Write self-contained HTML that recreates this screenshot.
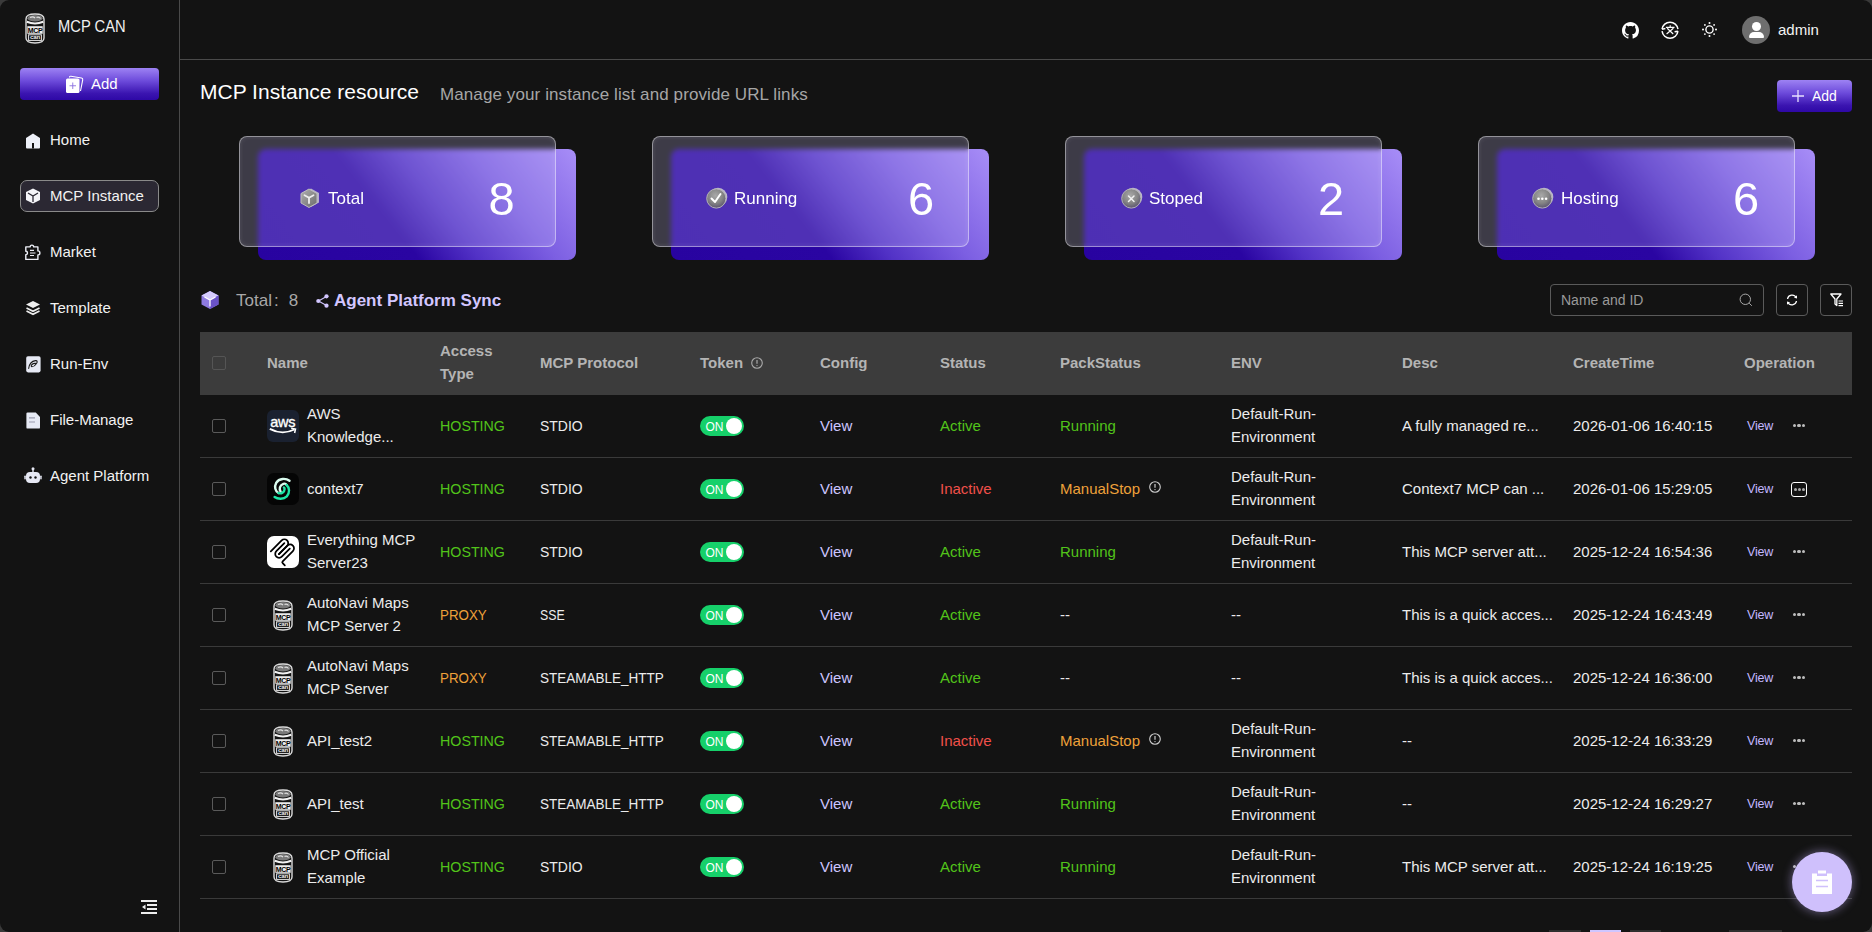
<!DOCTYPE html>
<html><head><meta charset="utf-8">
<style>
*{box-sizing:border-box;margin:0;padding:0}
html,body{width:1872px;height:932px;overflow:hidden;background:#3a3a3a;font-family:"Liberation Sans",sans-serif;color:#e8e8e8}
#wrap{position:absolute;left:0;top:0;width:1872px;height:932px;background:#131313;border-radius:9px;overflow:hidden}
.abs{position:absolute}
.nw{white-space:nowrap}
#side{position:absolute;left:0;top:0;width:180px;height:932px;border-right:1px solid #4a4a4a}
#hdr{position:absolute;left:180px;top:59px;width:1692px;height:1px;background:#4a4a4a}
.logo-t{position:absolute;left:58px;top:18px;font-size:16px;color:#f0f0f0;white-space:nowrap;transform:scaleX(0.92);transform-origin:0 50%}
.grad-btn{background:linear-gradient(180deg,#9d82f3 0%,#6d4bdb 40%,#3a14b0 80%,#2e08a6 100%)}
.btn-add{position:absolute;left:20px;top:68px;width:139px;height:32px;border-radius:4px;color:#fff;font-size:15px}
.nav{position:absolute;left:50px;font-size:15px;color:#f2f2f2;white-space:nowrap}
.nav-ic{position:absolute;left:25px}
.nav-active{position:absolute;left:20px;top:180px;width:139px;height:32px;border:1px solid #8a8a8a;border-radius:7px;background:#2b2833}
.title{position:absolute;left:200px;top:80px;font-size:21px;color:#fff;white-space:nowrap}
.sub{position:absolute;left:440px;top:84.5px;font-size:17px;letter-spacing:0.1px;color:#a6a6a6;white-space:nowrap}
.card{position:absolute;top:136px;width:337px;height:124px}
.card .back{position:absolute;left:19px;top:13px;width:318px;height:111px;border-radius:8px;background:linear-gradient(52deg,#2803a0 0%,#2a05a2 40%,#5232c6 55%,#7c5fe2 74%,#a88ef7 100%)}
.card .front{position:absolute;left:0;top:0;width:317px;height:111px;border-radius:8px;background:rgba(205,195,245,0.23);border:1px solid rgba(255,255,255,0.45);box-shadow:inset 0 0 5px rgba(255,255,255,0.12);backdrop-filter:blur(2.5px);-webkit-backdrop-filter:blur(2.5px)}
.card .lbl{position:absolute;top:53px;font-size:17px;color:#fff;white-space:nowrap;line-height:20px}
.card .num{position:absolute;top:39.5px;font-size:47px;color:#fff;line-height:46px;white-space:nowrap}
.card .ic2{position:absolute;top:51px}
.card .icx{position:absolute;top:52px;width:20px;height:20px;border-radius:50%;background:radial-gradient(circle at 40% 35%,#b8b8b8 0%,#8a8a8a 45%,#5e5e5e 100%);border:1px solid #a0a0a0}
.thead{position:absolute;left:200px;top:332px;width:1652px;height:63px;background:#3c3c3c}
.th{position:absolute;top:0;height:63px;padding-bottom:3px;display:flex;align-items:center;font-size:15px;font-weight:bold;color:#b4b4b4;line-height:23px;white-space:nowrap}
.tr{position:absolute;left:200px;width:1652px;height:63px;border-bottom:1px solid #3a3a3a}
.td{position:absolute;top:0;height:62px;padding-bottom:2px;display:flex;align-items:center;font-size:15px;color:#ececec;line-height:23px;white-space:nowrap}
.chk{position:absolute;width:14px;height:14px;border:1px solid #5a5a5a;border-radius:2px}
.ico{position:relative;width:32px;height:32px;border-radius:6px;overflow:hidden}
.info{margin-left:9px;position:relative;top:-1px}
.tog{position:absolute;width:44px;height:20px;border-radius:10px;background:#16d06a}
.tog span{position:absolute;left:5.5px;top:4px;font-size:12px;color:#fff;line-height:14px}
.tog i{position:absolute;right:2px;top:2px;width:16px;height:16px;border-radius:50%;background:#fff}
.dots{position:absolute;display:flex;gap:1.5px;padding-left:0.5px}
.dots i{display:block;width:3.3px;height:3.3px;border-radius:50%;background:#bdbdbd}
.dots.boxed{width:16px;height:15px;border:1.5px solid #fff;border-radius:3px;justify-content:center;align-items:center;gap:1px}
.dots.boxed i{width:3px;height:3px;background:#aaa}
</style></head><body>
<div id="wrap"><svg width="0" height="0" style="position:absolute"><defs><radialGradient id="gball" cx="45%" cy="35%" r="65%"><stop offset="0" stop-color="#a8a8a8"/><stop offset="0.6" stop-color="#858585"/><stop offset="1" stop-color="#5d5670"/></radialGradient><linearGradient id="ghex" x1="0" y1="0" x2="1" y2="1"><stop offset="0" stop-color="#b0b0b0"/><stop offset="1" stop-color="#6a6a6a"/></linearGradient></defs></svg>
<div id="side">
  <!-- logo can -->
  <svg style="position:absolute;left:24px;top:12px" width="22" height="32" viewBox="0 0 22 32"><path d="M2 7 Q2 2 11 2 Q20 2 20 7 L20 26 Q20 31 11 31 Q2 31 2 26 Z" fill="#141414" stroke="#dcdcdc" stroke-width="1.4"/><ellipse cx="11" cy="6.2" rx="7.6" ry="3.3" fill="#7a7a7a"/><path d="M6 5.5 Q9 4 11 6 M12.5 5.5 Q15 4.5 16.5 6.5" stroke="#e0e0e0" stroke-width="1.1" fill="none"/><path d="M2.8 9.8 Q11 13.2 19.2 9.8" fill="none" stroke="#f2f2f2" stroke-width="2.2"/><rect x="3.3" y="14.2" width="15.4" height="7.6" fill="#ececec"/><text x="11" y="20.6" font-size="7" font-weight="bold" text-anchor="middle" fill="#000" font-family="Liberation Sans" letter-spacing="-0.3">MCP</text><rect x="4.6" y="22.8" width="12.8" height="5.6" fill="#0c0c0c" stroke="#e6e6e6" stroke-width="1"/><text x="11" y="27.4" font-size="6.2" font-weight="bold" text-anchor="middle" fill="#f0f0f0" font-family="Liberation Sans" letter-spacing="-0.3">can</text></svg>
  <div class="logo-t">MCP CAN</div>
  <div class="btn-add grad-btn">
    <svg class="abs" style="left:45px;top:7px" width="20" height="19" viewBox="0 0 20 19"><path d="M4.5 2.5 Q4.5 1 6 1.2 L16.5 3 Q18 3.3 17.7 4.8 L15.5 16" fill="none" stroke="#fff" stroke-width="1.1"/><rect x="1" y="3.5" width="13.5" height="14.5" rx="1.5" fill="#fff"/><path d="M7.75 7.5v6.5M4.5 10.75h6.5" stroke="#8a70e0" stroke-width="0.9"/></svg>
    <span class="abs nw" style="left:71px;top:7px">Add</span>
  </div>
  <div class="nav-active"></div>
  <!-- home -->
  <svg class="nav-ic" style="top:133px" width="16" height="16" viewBox="0 0 16 16"><path d="M8 0.5 L15 5 L15 14.5 Q15 15.5 14 15.5 L2 15.5 Q1 15.5 1 14.5 L1 5 Z" fill="#eef0f8"/><rect x="7" y="10" width="2" height="5.5" fill="#131313"/></svg>
  <div class="nav" style="top:131px">Home</div>
  <!-- cube -->
  <svg class="nav-ic" style="top:188px" width="16" height="16" viewBox="0 0 16 16"><path d="M8 0.5 L15 4 L15 12 L8 15.5 L1 12 L1 4 Z" fill="#f4f4f8"/><path d="M3 5 L8 8 L13 5 M8 8 L8 14" fill="none" stroke="#2b2833" stroke-width="1.3"/></svg>
  <div class="nav" style="top:187px">MCP Instance</div>
  <!-- market -->
  <svg class="nav-ic" style="top:243.5px;left:25px" width="17" height="17" viewBox="0 0 17 17"><path d="M0.8 2.9 H5.1 A1.8 1.8 0 0 1 8.7 2.9 H12.9 V6.9 A2 2 0 0 1 12.9 10.9 V15.4 H0.8 V10.6 A1.7 1.7 0 0 0 0.8 7.2 Z" fill="none" stroke="#eef0f8" stroke-width="1.4" stroke-linejoin="round"/><path d="M5 6.4h4M5 9h5.5M5 11.5h4" stroke="#eef0f8" stroke-width="1.1"/></svg>
  <div class="nav" style="top:243px">Market</div>
  <!-- template layers -->
  <svg class="nav-ic" style="top:300px" width="16" height="16" viewBox="0 0 16 16"><path d="M8 1 L15 4.5 L8 8 L1 4.5 Z" fill="#eee"/><path d="M1.5 8 L8 11.3 L14.5 8" fill="none" stroke="#eee" stroke-width="1.6"/><path d="M1.5 11 L8 14.3 L14.5 11" fill="none" stroke="#eee" stroke-width="1.6"/></svg>
  <div class="nav" style="top:299px">Template</div>
  <!-- run-env -->
  <svg class="nav-ic" style="top:355.5px;left:25.5px" width="15" height="17" viewBox="0 0 15 17"><rect x="0.2" y="0.2" width="14.4" height="16.2" rx="1.8" fill="#e6e9f4"/><path d="M2.7 12.4 C3.2 8.5 4.5 5.2 9.5 4.6 C11.5 4.4 11.5 6 10.5 7.5 C9.5 9 7.5 10.8 6 10.8 C5 10.8 5 9.5 6 8.5 C7 7.5 8.5 7.3 9.5 7.4" fill="none" stroke="#1a1a1a" stroke-width="1.1" stroke-linecap="round"/></svg>
  <div class="nav" style="top:355px">Run-Env</div>
  <!-- file -->
  <svg class="nav-ic" style="top:411.5px;left:26.3px" width="15" height="17" viewBox="0 0 15 17"><path d="M1.6 0.4h8.2l4.2 4.6v10.4q0 1.2-1.2 1.2h-11.2q-1.2 0-1.2-1.2v-13.8q0-1.2 1.2-1.2z" fill="#e6e9f4"/><path d="M3 5.8h6M3 10h6" stroke="#9a9cae" stroke-width="1.2"/></svg>
  <div class="nav" style="top:411px">File-Manage</div>
  <!-- robot -->
  <svg class="nav-ic" style="top:467px;left:24px" width="18" height="17" viewBox="0 0 18 17"><circle cx="9" cy="1.8" r="1.5" fill="#e6e8f4"/><rect x="8.3" y="2" width="1.4" height="3" fill="#e6e8f4"/><rect x="2" y="5" width="14" height="11" rx="4" fill="#e6e8f4"/><rect x="0.3" y="8.5" width="1.5" height="4" rx="0.7" fill="#e6e8f4"/><rect x="16.2" y="8.5" width="1.5" height="4" rx="0.7" fill="#e6e8f4"/><circle cx="6.5" cy="10.5" r="1.2" fill="#131313"/><circle cx="11.5" cy="10.5" r="1.2" fill="#131313"/></svg>
  <div class="nav" style="top:467px">Agent Platform</div>
  <!-- collapse -->
  <svg class="abs" style="left:141px;top:900px" width="16" height="14" viewBox="0 0 16 14"><rect x="0" y="0" width="16" height="2" fill="#eee"/><rect x="6" y="4" width="10" height="2" fill="#eee"/><rect x="6" y="8" width="10" height="2" fill="#eee"/><rect x="0" y="12" width="16" height="2" fill="#eee"/><path d="M1 7 L4.5 4.5 L4.5 9.5 Z" fill="#eee"/></svg>
</div>
<div id="hdr"></div>

<!-- header icons -->
<svg class="abs" style="left:1621.5px;top:21.5px" width="17" height="17" viewBox="0 0 16 16"><path fill="#fff" d="M8 0C3.58 0 0 3.58 0 8c0 3.54 2.29 6.53 5.47 7.59.4.07.55-.17.55-.38 0-.19-.01-.82-.01-1.49-2.01.37-2.53-.49-2.69-.94-.09-.23-.48-.94-.82-1.13-.28-.15-.68-.52-.01-.53.63-.01 1.08.58 1.23.82.72 1.21 1.87.87 2.33.66.07-.52.28-.87.51-1.07-1.78-.2-3.64-.89-3.64-3.95 0-.87.31-1.59.82-2.15-.08-.2-.36-1.02.08-2.12 0 0 .67-.21 2.2.82.64-.18 1.32-.27 2-.27.68 0 1.36.09 2 .27 1.53-1.04 2.2-.82 2.2-.82.44 1.1.16 1.92.08 2.12.51.56.82 1.27.82 2.15 0 3.07-1.87 3.75-3.65 3.95.29.25.54.73.54 1.48 0 1.07-.01 1.93-.01 2.2 0 .21.15.46.55.38A8.013 8.013 0 0016 8c0-4.42-3.58-8-8-8z"/></svg>
<svg class="abs" style="left:1660.5px;top:21px" width="18" height="18" viewBox="0 0 18 18"><g fill="none" stroke="#fff" stroke-width="1.5"><path d="M1.06 8.2 A8 8 0 0 1 16.94 8.2"/><path d="M16.94 10.2 A8 8 0 0 1 1.06 10.2"/><path d="M1.06 8.2 L4.4 7.6"/><path d="M16.94 10.2 L13.6 10.8"/></g><g fill="none" stroke="#fff" stroke-width="1.2"><path d="M9.2 4.2v1.6M4.9 6.3h8.6M6.2 7.2 L12.2 13M12.4 7.2 L5.6 13"/></g></svg>
<svg class="abs" style="left:1702px;top:22px" width="15" height="15" viewBox="0 0 15 15"><circle cx="7.5" cy="7.5" r="3.6" fill="none" stroke="#fff" stroke-width="1.4"/><g fill="#fff"><circle cx="7.5" cy="1" r="1"/><circle cx="7.5" cy="14" r="1"/><circle cx="1" cy="7.5" r="1"/><circle cx="14" cy="7.5" r="1"/><circle cx="2.9" cy="2.9" r="0.9"/><circle cx="12.1" cy="12.1" r="0.9"/><circle cx="2.9" cy="12.1" r="0.9"/><circle cx="12.1" cy="2.9" r="0.9"/></g></svg>
<div class="abs" style="left:1742px;top:16px;width:28px;height:28px;border-radius:50%;background:#6e6e6e;overflow:hidden">
  <div class="abs" style="left:10px;top:6px;width:9px;height:9px;border-radius:50%;background:#fff"></div>
  <div class="abs" style="left:7px;top:16px;width:14.5px;height:6px;border-radius:5px 5px 1px 1px;background:#fff"></div>
</div>
<div class="abs nw" style="left:1778px;top:21px;font-size:15px;color:#f2f2f2">admin</div>

<div class="title">MCP Instance resource</div>
<div class="sub">Manage your instance list and provide URL links</div>
<div class="abs grad-btn" style="left:1777px;top:80px;width:75px;height:32px;border-radius:4px">
  <svg class="abs" style="left:15px;top:10px" width="12" height="12" viewBox="0 0 12 12"><path d="M6 0v12M0 6h12" stroke="#e8e0ff" stroke-width="1.3"/></svg>
  <span class="abs nw" style="left:35px;top:8px;font-size:14px;color:#fff">Add</span>
</div>

<!-- cards -->
<div class="card" style="left:239px"><div class="back"></div><div class="front"></div>
  <svg class="ic2" style="left:60px" width="22" height="22" viewBox="0 0 22 22"><path d="M12 1.5 L20 6 L20 15.5 L12 20 L4 15.5 L4 6 Z" fill="#cfcfcf" opacity="0.8"/><path d="M10 2 L18 6.5 L18 16 L10 20.5 L2 16 L2 6.5 Z" fill="url(#ghex)" stroke="#bdbdbd" stroke-width="1"/><path d="M5.5 8.3 L10 10.8 L14.5 8.3 M10 10.8 L10 16" fill="none" stroke="#eee" stroke-width="1.8" stroke-linecap="round"/></svg><div class="lbl" style="left:89px">Total</div><div class="num" style="left:249.5px">8</div></div>
<div class="card" style="left:652px"><div class="back"></div><div class="front"></div>
  <svg class="ic2" style="left:54px" width="22" height="22" viewBox="0 0 22 22"><circle cx="12" cy="10" r="9.3" fill="#cfcfcf" opacity="0.85"/><circle cx="10.3" cy="11.5" r="9.6" fill="url(#gball)" stroke="#b4b4b4" stroke-width="1"/><path d="M5.5 11.5 L9 15 L14.5 7" fill="none" stroke="#fff" stroke-width="2" stroke-linecap="round" stroke-linejoin="round"/></svg><div class="lbl" style="left:82px">Running</div><div class="num" style="left:256px">6</div></div>
<div class="card" style="left:1065px"><div class="back"></div><div class="front"></div>
  <svg class="ic2" style="left:56px" width="22" height="22" viewBox="0 0 22 22"><circle cx="12" cy="10" r="9.3" fill="#cfcfcf" opacity="0.85"/><circle cx="10.3" cy="11.5" r="9.6" fill="url(#gball)" stroke="#b4b4b4" stroke-width="1"/><path d="M7.5 9 L13 14.5 M13 9 L7.5 14.5" fill="none" stroke="#f2f2f2" stroke-width="1.5" stroke-linecap="round"/></svg><div class="lbl" style="left:84px">Stoped</div><div class="num" style="left:253px">2</div></div>
<div class="card" style="left:1478px"><div class="back"></div><div class="front"></div>
  <svg class="ic2" style="left:54px" width="22" height="22" viewBox="0 0 22 22"><circle cx="12" cy="10" r="9.3" fill="#cfcfcf" opacity="0.85"/><circle cx="10.3" cy="11.5" r="9.6" fill="url(#gball)" stroke="#b4b4b4" stroke-width="1"/><circle cx="6.5" cy="11.8" r="1.3" fill="#fff"/><circle cx="10.3" cy="11.8" r="1.3" fill="#fff"/><circle cx="14.1" cy="11.8" r="1.3" fill="#fff"/></svg><div class="lbl" style="left:83px">Hosting</div><div class="num" style="left:255px">6</div></div>

<!-- TOOLBAR -->
<svg class="abs" style="left:200px;top:290px" width="20" height="20" viewBox="0 0 20 20"><path d="M10 1 L18.5 5.5 L18.5 14.5 L10 19 L1.5 14.5 L1.5 5.5 Z" fill="#8e7ae0"/><path d="M10 1 L18.5 5.5 L10 10 L1.5 5.5 Z" fill="#d6ccff"/><path d="M10 10 L18.5 5.5 L18.5 14.5 L10 19 Z" fill="#6a52c8"/><path d="M4.5 7 L10 10 L15.5 7 M10 10 L10 16.5" fill="none" stroke="#fff" stroke-width="1.3"/></svg>
<div class="abs nw" style="left:236px;top:291px;font-size:17px;color:#a8a8a8;line-height:20px">Total<span style="margin-left:2px">:</span><span style="margin-left:10px">8</span></div>
<svg class="abs" style="left:315.5px;top:293.5px" width="13" height="14" viewBox="0 0 13 14"><path d="M10.5 2.5 L2.5 7 L10.5 11.5" fill="none" stroke="#d2c6ff" stroke-width="1.1"/><circle cx="10.5" cy="2.3" r="2.1" fill="#d2c6ff"/><circle cx="2.3" cy="7" r="2.1" fill="#d2c6ff"/><circle cx="10.5" cy="11.7" r="2.1" fill="#d2c6ff"/></svg>
<div class="abs nw" style="left:334px;top:291px;font-size:17px;font-weight:bold;color:#d2c6ff;line-height:20px">Agent Platform Sync</div>
<div class="abs" style="left:1550px;top:284px;width:214px;height:32px;border:1px solid #5a5a5a;border-radius:4px"></div>
<div class="abs nw" style="left:1561px;top:292px;font-size:14px;color:#9a9a9a">Name and ID</div>
<svg class="abs" style="left:1739px;top:293px" width="14" height="14" viewBox="0 0 14 14"><circle cx="6.3" cy="6.3" r="5.2" fill="none" stroke="#a8a8a8" stroke-width="1"/><path d="M10.2 10.2 L12.8 12.8" stroke="#a8a8a8" stroke-width="1"/></svg>
<div class="abs" style="left:1776px;top:284px;width:32px;height:32px;border:1px solid #5a5a5a;border-radius:4px"></div>
<svg class="abs" style="left:1786px;top:294px" width="12" height="12" viewBox="0 0 12 12"><path d="M1.5 5 A4.6 4.6 0 0 1 10.2 3.8" fill="none" stroke="#fff" stroke-width="1.3"/><path d="M10.5 7 A4.6 4.6 0 0 1 1.8 8.2" fill="none" stroke="#fff" stroke-width="1.3"/><path d="M8 3.8 L11 4.5 L11 1.2 Z" fill="#fff"/><path d="M4 8.2 L1 7.5 L1 10.8 Z" fill="#fff"/></svg>
<div class="abs" style="left:1820px;top:284px;width:32px;height:32px;border:1px solid #5a5a5a;border-radius:4px"></div>
<svg class="abs" style="left:1830px;top:293px" width="14" height="14" viewBox="0 0 14 14"><path d="M0.8 1 H11 L6.8 6 V12.5 L5 11 V6 Z" fill="none" stroke="#fff" stroke-width="1.3" stroke-linejoin="round"/><path d="M8.5 8h4.5M8.5 10.3h4.5M8.5 12.6h4.5" stroke="#fff" stroke-width="1.2"/></svg>

<div class="thead">
<div class="chk" style="left:12px;top:24px;border-color:#555"></div>
<div class="th" style="left:67px">Name</div>
<div class="th" style="left:240px">Access<br>Type</div>
<div class="th" style="left:340px">MCP Protocol</div>
<div class="th" style="left:500px">Token</div>
<div class="th" style="left:620px">Config</div>
<div class="th" style="left:740px">Status</div>
<div class="th" style="left:860px">PackStatus</div>
<div class="th" style="left:1031px">ENV</div>
<div class="th" style="left:1202px">Desc</div>
<div class="th" style="left:1373px">CreateTime</div>
<div class="th" style="left:1544px">Operation</div>
<svg class="abs" style="left:551px;top:25px" width="12" height="12" viewBox="0 0 12 12"><circle cx="6" cy="6" r="5.3" fill="none" stroke="#aaa" stroke-width="1.1"/><path d="M6 3v3.8" stroke="#aaa" stroke-width="1.2"/><circle cx="6" cy="8.6" r="0.7" fill="#aaa"/></svg>
</div>
<div class="tr" style="top:395px">
<div class="chk" style="left:12px;top:24px"></div>
<div class="td" style="left:67px;width:32px;height:32px;top:15px;padding:0"><div class="ico" style="background:#1a2130"><svg width="32" height="32" viewBox="0 0 32 32"><text x="15.8" y="17" font-size="14.5" font-family="Liberation Sans" fill="#fff" text-anchor="middle" stroke="#fff" stroke-width="0.35" letter-spacing="-0.3">aws</text><path d="M2.8 18.8 Q15 25.5 27.5 19.5" fill="none" stroke="#fff" stroke-width="1.9"/><path d="M24.2 18.3 L28.5 19 L27.6 23" fill="none" stroke="#fff" stroke-width="1.5"/></svg></div></div>
<div class="td" style="left:107px;">AWS<br>Knowledge...</div>
<div class="td" style="left:240px;color:#52c41a"><span style="display:inline-block;transform:scaleX(0.95);transform-origin:0 50%">HOSTING</span></div>
<div class="td" style="left:340px;"><span style="display:inline-block;transform:scaleX(0.93);transform-origin:0 50%">STDIO</span></div>
<div class="tog" style="left:500px;top:21px"><span>ON</span><i></i></div>
<div class="td" style="left:620px;color:#cdc5ff">View</div>
<div class="td" style="left:740px;color:#52c41a">Active</div>
<div class="td" style="left:860px;color:#52c41a">Running</div>
<div class="td" style="left:1031px;">Default-Run-<br>Environment</div>
<div class="td" style="left:1202px;">A fully managed re...</div>
<div class="td" style="left:1373px;">2026-01-06 16:40:15</div>
<div class="td" style="left:1547px;color:#c4b8ff;font-size:12.5px;padding-bottom:0;top:0;letter-spacing:-0.2px">View</div>
<div class="dots" style="left:1592px;top:29px"><i></i><i></i><i></i></div>
</div>
<div class="tr" style="top:458px">
<div class="chk" style="left:12px;top:24px"></div>
<div class="td" style="left:67px;width:32px;height:32px;top:15px;padding:0"><div class="ico" style="background:#050505;border-radius:7px"><svg width="32" height="32" viewBox="0 0 32 32"><g fill="none" stroke-width="2.4" stroke-linecap="round"><path d="M22.5 7.8 C19 5 12 5 9.2 9.8 C7 13.8 8.3 18.3 11.5 20" stroke="#d9fbee"/><path d="M13.6 18.6 C12 16 12.5 12.2 16.4 10.8 C18 10.3 19.2 11.2 19.6 12" stroke="#d9fbee"/><path d="M19.6 12 C22.6 14.6 23 20 19.8 23.4 C16.6 26.6 10.6 26.2 7.6 24" stroke="#1de5a6"/><path d="M11.5 20 C14 21.2 17.6 19.2 17.6 16 C17.6 15.2 17.2 14.8 16.9 14.6" stroke="#1de5a6"/></g></svg></div></div>
<div class="td" style="left:107px;">context7</div>
<div class="td" style="left:240px;color:#52c41a"><span style="display:inline-block;transform:scaleX(0.95);transform-origin:0 50%">HOSTING</span></div>
<div class="td" style="left:340px;"><span style="display:inline-block;transform:scaleX(0.93);transform-origin:0 50%">STDIO</span></div>
<div class="tog" style="left:500px;top:21px"><span>ON</span><i></i></div>
<div class="td" style="left:620px;color:#cdc5ff">View</div>
<div class="td" style="left:740px;color:#f0504a">Inactive</div>
<div class="td" style="left:860px;color:#eea13a">ManualStop<svg class="info" width="12" height="12" viewBox="0 0 12 12"><circle cx="6" cy="6" r="5.3" fill="none" stroke="#cfcfcf" stroke-width="1.1"/><path d="M6 3v3.8" stroke="#cfcfcf" stroke-width="1.2"/><circle cx="6" cy="8.6" r="0.7" fill="#cfcfcf"/></svg></div>
<div class="td" style="left:1031px;">Default-Run-<br>Environment</div>
<div class="td" style="left:1202px;">Context7 MCP can ...</div>
<div class="td" style="left:1373px;">2026-01-06 15:29:05</div>
<div class="td" style="left:1547px;color:#c4b8ff;font-size:12.5px;padding-bottom:0;top:0;letter-spacing:-0.2px">View</div>
<div class="dots boxed" style="left:1591px;top:23.5px"><i></i><i></i><i></i></div>
</div>
<div class="tr" style="top:521px">
<div class="chk" style="left:12px;top:24px"></div>
<div class="td" style="left:67px;width:32px;height:32px;top:15px;padding:0"><div class="ico" style="background:#fff;border-radius:7px"><svg width="32" height="32" viewBox="0 0 32 32"><g transform="translate(-0.2,-0.3) scale(0.16)" fill="none" stroke="#000" stroke-width="11" stroke-linecap="round"><path d="M25 97.85L92.88 29.97C102.26 20.6 117.45 20.6 126.82 29.97C136.2 39.34 136.2 54.54 126.82 63.91L75.56 115.18"/><path d="M76.27 114.47L128.85 61.88C138.23 52.51 153.42 52.51 162.79 61.88L163.07 62.16C172.44 71.53 172.44 86.73 163.07 96.1L99.21 159.96C96.09 163.09 96.09 168.15 99.21 171.28L112.7 184.77"/><path d="M109.85 46.94L59.66 97.14C50.28 106.51 50.28 121.71 59.66 131.08C69.03 140.45 84.23 140.45 93.6 131.08L143.79 80.88"/></g></svg></div></div>
<div class="td" style="left:107px;">Everything MCP<br>Server23</div>
<div class="td" style="left:240px;color:#52c41a"><span style="display:inline-block;transform:scaleX(0.95);transform-origin:0 50%">HOSTING</span></div>
<div class="td" style="left:340px;"><span style="display:inline-block;transform:scaleX(0.93);transform-origin:0 50%">STDIO</span></div>
<div class="tog" style="left:500px;top:21px"><span>ON</span><i></i></div>
<div class="td" style="left:620px;color:#cdc5ff">View</div>
<div class="td" style="left:740px;color:#52c41a">Active</div>
<div class="td" style="left:860px;color:#52c41a">Running</div>
<div class="td" style="left:1031px;">Default-Run-<br>Environment</div>
<div class="td" style="left:1202px;">This MCP server att...</div>
<div class="td" style="left:1373px;">2025-12-24 16:54:36</div>
<div class="td" style="left:1547px;color:#c4b8ff;font-size:12.5px;padding-bottom:0;top:0;letter-spacing:-0.2px">View</div>
<div class="dots" style="left:1592px;top:29px"><i></i><i></i><i></i></div>
</div>
<div class="tr" style="top:584px">
<div class="chk" style="left:12px;top:24px"></div>
<div class="td" style="left:67px;width:32px;height:32px;top:15px;padding:0"><svg style="position:absolute;left:5px;top:0" width="22" height="32" viewBox="0 0 22 32"><path d="M2 7 Q2 2 11 2 Q20 2 20 7 L20 26 Q20 31 11 31 Q2 31 2 26 Z" fill="#141414" stroke="#dcdcdc" stroke-width="1.4"/><ellipse cx="11" cy="6.2" rx="7.6" ry="3.3" fill="#7a7a7a"/><path d="M6 5.5 Q9 4 11 6 M12.5 5.5 Q15 4.5 16.5 6.5" stroke="#e0e0e0" stroke-width="1.1" fill="none"/><path d="M2.8 9.8 Q11 13.2 19.2 9.8" fill="none" stroke="#f2f2f2" stroke-width="2.2"/><rect x="3.3" y="14.2" width="15.4" height="7.6" fill="#ececec"/><text x="11" y="20.6" font-size="7" font-weight="bold" text-anchor="middle" fill="#000" font-family="Liberation Sans" letter-spacing="-0.3">MCP</text><rect x="4.6" y="22.8" width="12.8" height="5.6" fill="#0c0c0c" stroke="#e6e6e6" stroke-width="1"/><text x="11" y="27.4" font-size="6.2" font-weight="bold" text-anchor="middle" fill="#f0f0f0" font-family="Liberation Sans" letter-spacing="-0.3">can</text></svg></div>
<div class="td" style="left:107px;">AutoNavi Maps<br>MCP Server 2</div>
<div class="td" style="left:240px;color:#eea13a"><span style="display:inline-block;transform:scaleX(0.89);transform-origin:0 50%">PROXY</span></div>
<div class="td" style="left:340px;"><span style="display:inline-block;transform:scaleX(0.82);transform-origin:0 50%">SSE</span></div>
<div class="tog" style="left:500px;top:21px"><span>ON</span><i></i></div>
<div class="td" style="left:620px;color:#cdc5ff">View</div>
<div class="td" style="left:740px;color:#52c41a">Active</div>
<div class="td" style="left:860px;color:#e8e8e8">--</div>
<div class="td" style="left:1031px;">--</div>
<div class="td" style="left:1202px;">This is a quick acces...</div>
<div class="td" style="left:1373px;">2025-12-24 16:43:49</div>
<div class="td" style="left:1547px;color:#c4b8ff;font-size:12.5px;padding-bottom:0;top:0;letter-spacing:-0.2px">View</div>
<div class="dots" style="left:1592px;top:29px"><i></i><i></i><i></i></div>
</div>
<div class="tr" style="top:647px">
<div class="chk" style="left:12px;top:24px"></div>
<div class="td" style="left:67px;width:32px;height:32px;top:15px;padding:0"><svg style="position:absolute;left:5px;top:0" width="22" height="32" viewBox="0 0 22 32"><path d="M2 7 Q2 2 11 2 Q20 2 20 7 L20 26 Q20 31 11 31 Q2 31 2 26 Z" fill="#141414" stroke="#dcdcdc" stroke-width="1.4"/><ellipse cx="11" cy="6.2" rx="7.6" ry="3.3" fill="#7a7a7a"/><path d="M6 5.5 Q9 4 11 6 M12.5 5.5 Q15 4.5 16.5 6.5" stroke="#e0e0e0" stroke-width="1.1" fill="none"/><path d="M2.8 9.8 Q11 13.2 19.2 9.8" fill="none" stroke="#f2f2f2" stroke-width="2.2"/><rect x="3.3" y="14.2" width="15.4" height="7.6" fill="#ececec"/><text x="11" y="20.6" font-size="7" font-weight="bold" text-anchor="middle" fill="#000" font-family="Liberation Sans" letter-spacing="-0.3">MCP</text><rect x="4.6" y="22.8" width="12.8" height="5.6" fill="#0c0c0c" stroke="#e6e6e6" stroke-width="1"/><text x="11" y="27.4" font-size="6.2" font-weight="bold" text-anchor="middle" fill="#f0f0f0" font-family="Liberation Sans" letter-spacing="-0.3">can</text></svg></div>
<div class="td" style="left:107px;">AutoNavi Maps<br>MCP Server</div>
<div class="td" style="left:240px;color:#eea13a"><span style="display:inline-block;transform:scaleX(0.89);transform-origin:0 50%">PROXY</span></div>
<div class="td" style="left:340px;"><span style="display:inline-block;transform:scaleX(0.9);transform-origin:0 50%">STEAMABLE_HTTP</span></div>
<div class="tog" style="left:500px;top:21px"><span>ON</span><i></i></div>
<div class="td" style="left:620px;color:#cdc5ff">View</div>
<div class="td" style="left:740px;color:#52c41a">Active</div>
<div class="td" style="left:860px;color:#e8e8e8">--</div>
<div class="td" style="left:1031px;">--</div>
<div class="td" style="left:1202px;">This is a quick acces...</div>
<div class="td" style="left:1373px;">2025-12-24 16:36:00</div>
<div class="td" style="left:1547px;color:#c4b8ff;font-size:12.5px;padding-bottom:0;top:0;letter-spacing:-0.2px">View</div>
<div class="dots" style="left:1592px;top:29px"><i></i><i></i><i></i></div>
</div>
<div class="tr" style="top:710px">
<div class="chk" style="left:12px;top:24px"></div>
<div class="td" style="left:67px;width:32px;height:32px;top:15px;padding:0"><svg style="position:absolute;left:5px;top:0" width="22" height="32" viewBox="0 0 22 32"><path d="M2 7 Q2 2 11 2 Q20 2 20 7 L20 26 Q20 31 11 31 Q2 31 2 26 Z" fill="#141414" stroke="#dcdcdc" stroke-width="1.4"/><ellipse cx="11" cy="6.2" rx="7.6" ry="3.3" fill="#7a7a7a"/><path d="M6 5.5 Q9 4 11 6 M12.5 5.5 Q15 4.5 16.5 6.5" stroke="#e0e0e0" stroke-width="1.1" fill="none"/><path d="M2.8 9.8 Q11 13.2 19.2 9.8" fill="none" stroke="#f2f2f2" stroke-width="2.2"/><rect x="3.3" y="14.2" width="15.4" height="7.6" fill="#ececec"/><text x="11" y="20.6" font-size="7" font-weight="bold" text-anchor="middle" fill="#000" font-family="Liberation Sans" letter-spacing="-0.3">MCP</text><rect x="4.6" y="22.8" width="12.8" height="5.6" fill="#0c0c0c" stroke="#e6e6e6" stroke-width="1"/><text x="11" y="27.4" font-size="6.2" font-weight="bold" text-anchor="middle" fill="#f0f0f0" font-family="Liberation Sans" letter-spacing="-0.3">can</text></svg></div>
<div class="td" style="left:107px;">API_test2</div>
<div class="td" style="left:240px;color:#52c41a"><span style="display:inline-block;transform:scaleX(0.95);transform-origin:0 50%">HOSTING</span></div>
<div class="td" style="left:340px;"><span style="display:inline-block;transform:scaleX(0.9);transform-origin:0 50%">STEAMABLE_HTTP</span></div>
<div class="tog" style="left:500px;top:21px"><span>ON</span><i></i></div>
<div class="td" style="left:620px;color:#cdc5ff">View</div>
<div class="td" style="left:740px;color:#f0504a">Inactive</div>
<div class="td" style="left:860px;color:#eea13a">ManualStop<svg class="info" width="12" height="12" viewBox="0 0 12 12"><circle cx="6" cy="6" r="5.3" fill="none" stroke="#cfcfcf" stroke-width="1.1"/><path d="M6 3v3.8" stroke="#cfcfcf" stroke-width="1.2"/><circle cx="6" cy="8.6" r="0.7" fill="#cfcfcf"/></svg></div>
<div class="td" style="left:1031px;">Default-Run-<br>Environment</div>
<div class="td" style="left:1202px;">--</div>
<div class="td" style="left:1373px;">2025-12-24 16:33:29</div>
<div class="td" style="left:1547px;color:#c4b8ff;font-size:12.5px;padding-bottom:0;top:0;letter-spacing:-0.2px">View</div>
<div class="dots" style="left:1592px;top:29px"><i></i><i></i><i></i></div>
</div>
<div class="tr" style="top:773px">
<div class="chk" style="left:12px;top:24px"></div>
<div class="td" style="left:67px;width:32px;height:32px;top:15px;padding:0"><svg style="position:absolute;left:5px;top:0" width="22" height="32" viewBox="0 0 22 32"><path d="M2 7 Q2 2 11 2 Q20 2 20 7 L20 26 Q20 31 11 31 Q2 31 2 26 Z" fill="#141414" stroke="#dcdcdc" stroke-width="1.4"/><ellipse cx="11" cy="6.2" rx="7.6" ry="3.3" fill="#7a7a7a"/><path d="M6 5.5 Q9 4 11 6 M12.5 5.5 Q15 4.5 16.5 6.5" stroke="#e0e0e0" stroke-width="1.1" fill="none"/><path d="M2.8 9.8 Q11 13.2 19.2 9.8" fill="none" stroke="#f2f2f2" stroke-width="2.2"/><rect x="3.3" y="14.2" width="15.4" height="7.6" fill="#ececec"/><text x="11" y="20.6" font-size="7" font-weight="bold" text-anchor="middle" fill="#000" font-family="Liberation Sans" letter-spacing="-0.3">MCP</text><rect x="4.6" y="22.8" width="12.8" height="5.6" fill="#0c0c0c" stroke="#e6e6e6" stroke-width="1"/><text x="11" y="27.4" font-size="6.2" font-weight="bold" text-anchor="middle" fill="#f0f0f0" font-family="Liberation Sans" letter-spacing="-0.3">can</text></svg></div>
<div class="td" style="left:107px;">API_test</div>
<div class="td" style="left:240px;color:#52c41a"><span style="display:inline-block;transform:scaleX(0.95);transform-origin:0 50%">HOSTING</span></div>
<div class="td" style="left:340px;"><span style="display:inline-block;transform:scaleX(0.9);transform-origin:0 50%">STEAMABLE_HTTP</span></div>
<div class="tog" style="left:500px;top:21px"><span>ON</span><i></i></div>
<div class="td" style="left:620px;color:#cdc5ff">View</div>
<div class="td" style="left:740px;color:#52c41a">Active</div>
<div class="td" style="left:860px;color:#52c41a">Running</div>
<div class="td" style="left:1031px;">Default-Run-<br>Environment</div>
<div class="td" style="left:1202px;">--</div>
<div class="td" style="left:1373px;">2025-12-24 16:29:27</div>
<div class="td" style="left:1547px;color:#c4b8ff;font-size:12.5px;padding-bottom:0;top:0;letter-spacing:-0.2px">View</div>
<div class="dots" style="left:1592px;top:29px"><i></i><i></i><i></i></div>
</div>
<div class="tr" style="top:836px">
<div class="chk" style="left:12px;top:24px"></div>
<div class="td" style="left:67px;width:32px;height:32px;top:15px;padding:0"><svg style="position:absolute;left:5px;top:0" width="22" height="32" viewBox="0 0 22 32"><path d="M2 7 Q2 2 11 2 Q20 2 20 7 L20 26 Q20 31 11 31 Q2 31 2 26 Z" fill="#141414" stroke="#dcdcdc" stroke-width="1.4"/><ellipse cx="11" cy="6.2" rx="7.6" ry="3.3" fill="#7a7a7a"/><path d="M6 5.5 Q9 4 11 6 M12.5 5.5 Q15 4.5 16.5 6.5" stroke="#e0e0e0" stroke-width="1.1" fill="none"/><path d="M2.8 9.8 Q11 13.2 19.2 9.8" fill="none" stroke="#f2f2f2" stroke-width="2.2"/><rect x="3.3" y="14.2" width="15.4" height="7.6" fill="#ececec"/><text x="11" y="20.6" font-size="7" font-weight="bold" text-anchor="middle" fill="#000" font-family="Liberation Sans" letter-spacing="-0.3">MCP</text><rect x="4.6" y="22.8" width="12.8" height="5.6" fill="#0c0c0c" stroke="#e6e6e6" stroke-width="1"/><text x="11" y="27.4" font-size="6.2" font-weight="bold" text-anchor="middle" fill="#f0f0f0" font-family="Liberation Sans" letter-spacing="-0.3">can</text></svg></div>
<div class="td" style="left:107px;">MCP Official<br>Example</div>
<div class="td" style="left:240px;color:#52c41a"><span style="display:inline-block;transform:scaleX(0.95);transform-origin:0 50%">HOSTING</span></div>
<div class="td" style="left:340px;"><span style="display:inline-block;transform:scaleX(0.93);transform-origin:0 50%">STDIO</span></div>
<div class="tog" style="left:500px;top:21px"><span>ON</span><i></i></div>
<div class="td" style="left:620px;color:#cdc5ff">View</div>
<div class="td" style="left:740px;color:#52c41a">Active</div>
<div class="td" style="left:860px;color:#52c41a">Running</div>
<div class="td" style="left:1031px;">Default-Run-<br>Environment</div>
<div class="td" style="left:1202px;">This MCP server att...</div>
<div class="td" style="left:1373px;">2025-12-24 16:19:25</div>
<div class="td" style="left:1547px;color:#c4b8ff;font-size:12.5px;padding-bottom:0;top:0;letter-spacing:-0.2px">View</div>
<div class="dots" style="left:1592px;top:29px"><i></i><i></i><i></i></div>
</div>
<!-- /TABLE -->

<!-- FAB -->
<div class="abs" style="left:1792px;top:852px;width:60px;height:60px;border-radius:50%;background:#cfc0fc;box-shadow:0 0 10px 1px rgba(200,180,255,0.42)">
<svg class="abs" style="left:20px;top:18px" width="20" height="24" viewBox="0 0 20 24"><rect x="6" y="0.5" width="8" height="3" fill="#fff"/><path d="M0 3.5h5v2.5h10v-2.5h5v20.5h-20z" fill="#fff"/><path d="M4 10.5h12M4 16.5h12" stroke="#cfc0fc" stroke-width="1.6"/></svg>
</div>
<div class="abs" style="left:1549px;top:930px;width:32px;height:2px;background:#2e2e2e"></div>
<div class="abs" style="left:1590px;top:930px;width:31px;height:2px;background:#cfc6ff"></div>
<div class="abs" style="left:1630px;top:930px;width:31px;height:2px;background:#2e2e2e"></div>
<div class="abs" style="left:1729px;top:930px;width:53px;height:2px;background:#2e2e2e"></div>
</div>
</body></html>
